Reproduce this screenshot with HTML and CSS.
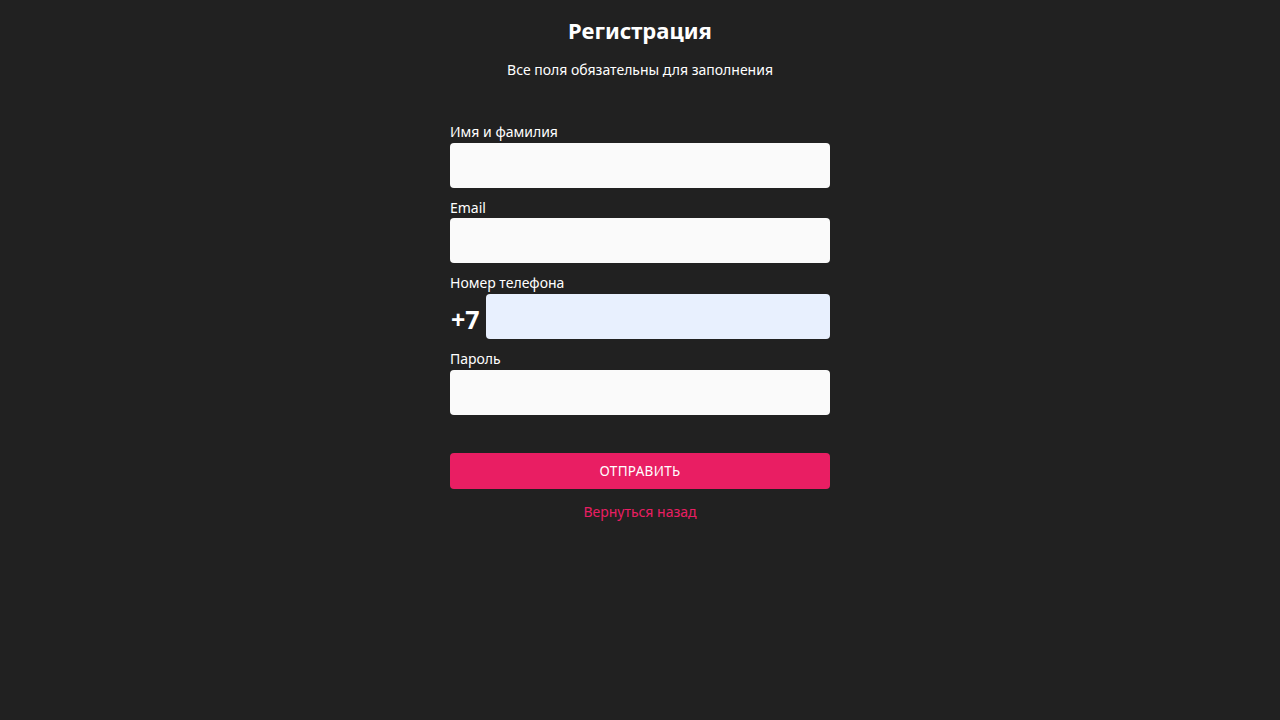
FILE: index.html
```html
<!DOCTYPE html>
<html lang="ru">
<head>
<meta charset="utf-8">
<title>Регистрация</title>
<link rel="stylesheet" href="styles.css">
</head>
<body>
<main class="page">
  <h1 class="title">Регистрация</h1>
  <p class="subtitle">Все поля обязательны для заполнения</p>
  <form class="form">
    <div class="field">
      <label class="label">Имя и фамилия</label>
      <input class="input" type="text">
    </div>
    <div class="field">
      <label class="label">Email</label>
      <input class="input" type="email">
    </div>
    <div class="field">
      <label class="label">Номер телефона</label>
      <div class="phone-row">
        <span class="prefix">+7</span>
        <input class="input input-phone" type="tel">
      </div>
    </div>
    <div class="field">
      <label class="label">Пароль</label>
      <input class="input" type="password">
    </div>
    <button class="submit" type="button">Отправить</button>
    <a class="back" href="#">Вернуться назад</a>
  </form>
</main>
</body>
</html>
```

FILE: styles.css
```css
html, body {
  margin: 0;
  padding: 0;
  background: #212121;
  color: #ffffff;
  font-family: "Noto Sans", "Open Sans", sans-serif;
}
.page {
  display: flex;
  flex-direction: column;
  align-items: center;
  padding-top: 14px;
}
.title {
  margin: 0;
  font-size: 22px;
  line-height: 32px;
  font-weight: 700;
}
.subtitle {
  margin: 14px 0 0;
  font-size: 14px;
  line-height: 20px;
}
.form {
  width: 380px;
  margin-top: 42px;
  display: flex;
  flex-direction: column;
}
.field {
  display: flex;
  flex-direction: column;
  margin-bottom: 10px;
}
.label {
  font-size: 14px;
  line-height: 20.667px;
}
.input {
  box-sizing: border-box;
  height: 45px;
  width: 100%;
  border: none;
  border-radius: 4px;
  background: #fafafa;
  padding: 0 12px;
  margin: 0;
  font: inherit;
  outline: none;
}
.phone-row {
  display: flex;
  align-items: center;
  gap: 4px;
}
.prefix {
  box-sizing: border-box;
  font-size: 25px;
  font-weight: 700;
  width: 32px;
  padding-left: 1px;
  padding-top: 4px;
  line-height: 30px;
  white-space: nowrap;
}
.input-phone {
  flex: 1;
  background: #e8f0fe;
}
.submit {
  margin-top: 28px;
  height: 36px;
  border: none;
  border-radius: 4px;
  background: #e91e63;
  color: #ffffff;
  font-family: inherit;
  font-size: 13.5px;
  text-transform: uppercase;
  letter-spacing: 0.3px;
  cursor: pointer;
}
.back {
  margin-top: 13px;
  align-self: center;
  color: #e91e63;
  text-decoration: none;
  font-size: 14px;
  line-height: 20px;
}
```
